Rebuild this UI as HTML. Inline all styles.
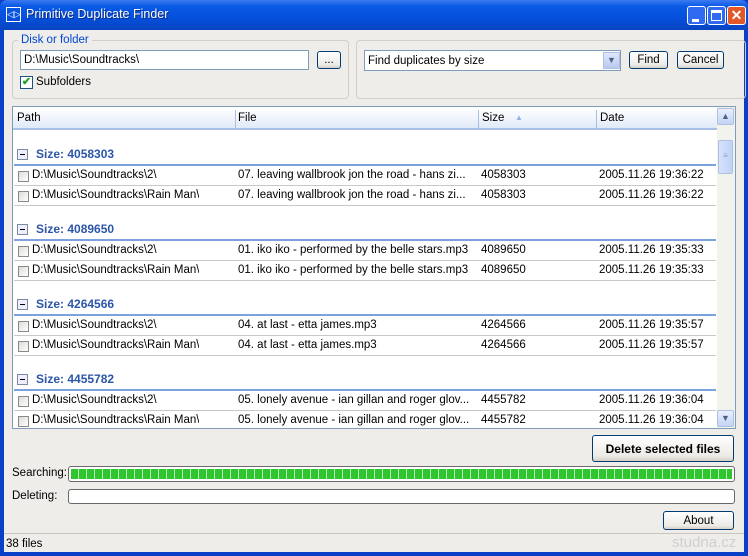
<!DOCTYPE html>
<html><head><meta charset="utf-8"><style>
*{box-sizing:border-box;margin:0;padding:0}
body{width:748px;height:556px;overflow:hidden;font-family:"Liberation Sans",sans-serif;font-size:11.5px;color:#000;background:#0a3fc8;position:relative}
.abs{position:absolute}
#title{left:0;top:0;width:748px;height:30px;background:linear-gradient(#3d7bf0,#0a5ae6 20%,#0550dc 60%,#0843c0);border-radius:7px 7px 0 0}
#client{left:4px;top:30px;width:740px;height:522px;background:#eeede9}
.gb{border:1px solid #d0cfc8;border-radius:4px}
.btn{border:1px solid #003c74;border-radius:3px;background:linear-gradient(#fff,#ecebe6 80%,#d6d0c5);font-size:11.5px;display:flex;align-items:center;justify-content:center}
.inp{background:#fff;border:1px solid #7f9db9}
.row{position:absolute;left:14px;width:702px;height:20px;border-bottom:1px solid #c8c8c8;background:#fff;overflow:hidden}
.row span{position:absolute;top:3px;white-space:nowrap;overflow:hidden}
.cb{position:absolute;left:4px;top:5px;width:11px;height:11px;border:1px solid #8a8a8a;background:linear-gradient(135deg,#dcdcd6,#fff)}
.gh{position:absolute;left:14px;width:702px;color:#2c55a8;font-weight:bold;font-size:12px}
.gh i{position:absolute;left:3px;top:3px;width:11px;height:11px;border:1px solid #7a8aa0;background:#eef;font-style:normal}
.gh i:after{content:"";position:absolute;left:2px;top:4px;width:5px;height:1px;background:#000}
.gl{position:absolute;left:14px;width:702px;height:2px;background:#7ba2dc}
</style></head><body>
<div id="title" class="abs">
 <div class="abs" style="left:6px;top:7px;width:15px;height:15px;border:1px solid #fff;color:#fff;font-size:9px;line-height:13px;text-align:center">◁▷</div>
 <div class="abs" style="left:26px;top:7px;color:#fff;font-size:12.5px;text-shadow:1px 1px #0a2a80">Primitive Duplicate Finder</div>
 <div class="abs" style="left:687px;top:6px;width:19px;height:19px;border:1px solid #fff;border-radius:3px;background:#2f6af0"><div class="abs" style="left:4px;top:12px;width:7px;height:3px;background:#fff"></div></div>
 <div class="abs" style="left:707px;top:6px;width:19px;height:19px;border:1px solid #fff;border-radius:3px;background:#2f6af0"><div class="abs" style="left:3px;top:3px;width:11px;height:11px;border:1px solid #fff;border-top-width:3px"></div></div>
 <div class="abs" style="left:727px;top:6px;width:19px;height:19px;border:1px solid #fff;border-radius:3px;background:#e2582a;color:#fff;font-weight:bold;font-size:14px;line-height:16px;text-align:center">✕</div>
</div>
<div id="client" class="abs"></div>
<div class="abs gb" style="left:12px;top:40px;width:337px;height:59px"></div>
<div class="abs" style="left:18px;top:34px;background:#eeede9;color:#0046d5;padding:0 3px">Disk or folder</div>
<div class="abs inp" style="left:20px;top:50px;width:289px;height:20px;padding:3px 3px">D:\Music\Soundtracks\</div>
<div class="abs btn" style="left:317px;top:51px;width:24px;height:18px">...</div>
<div class="abs" style="left:20px;top:76px;width:13px;height:13px;border:1px solid #1c5180;background:#fff;color:#21a121;font-size:11px;line-height:11px;text-align:center;font-weight:bold">✔</div>
<div class="abs" style="left:36px;top:76px">Subfolders</div>
<div class="abs gb" style="left:356px;top:40px;width:390px;height:59px"></div>
<div class="abs inp" style="left:364px;top:50px;width:257px;height:21px;padding:4px 3px">Find duplicates by size</div>
<div class="abs" style="left:603px;top:52px;width:17px;height:17px;background:linear-gradient(#dfe8fb,#b8c8ee);border:1px solid #b0c0e0;color:#4d6185;font-size:9px;text-align:center;line-height:15px">▼</div>
<div class="abs btn" style="left:629px;top:51px;width:39px;height:18px">Find</div>
<div class="abs btn" style="left:677px;top:51px;width:47px;height:18px">Cancel</div>
<div class="abs" style="left:12px;top:106px;width:724px;height:323px;background:#fff;border:1px solid #7f9db9"></div>
<div class="abs" style="left:13px;top:107px;width:704px;height:23px;background:linear-gradient(#fff,#f2f6fc 50%,#dfe9f8);border-bottom:2px solid #a8c0e8"></div>
<div class="abs" style="left:17px;top:112px">Path</div>
<div class="abs" style="left:235px;top:110px;width:1px;height:18px;background:#a8c0e0"></div>
<div class="abs" style="left:238px;top:112px">File</div>
<div class="abs" style="left:478px;top:110px;width:1px;height:18px;background:#a8c0e0"></div>
<div class="abs" style="left:482px;top:112px">Size</div>
<div class="abs" style="left:515px;top:113px;color:#8ab6e8;font-size:8px">▲</div>
<div class="abs" style="left:596px;top:110px;width:1px;height:18px;background:#a8c0e0"></div>
<div class="abs" style="left:600px;top:112px">Date</div>
<div class="abs" style="left:717px;top:107px;width:18px;height:321px;background:#f3f3ee"></div>
<div class="abs" style="left:717px;top:108px;width:17px;height:17px;border:1px solid #b0c0e0;border-radius:2px;background:linear-gradient(#e8efff,#c4d4f6);font-size:9px;color:#4d6185;text-align:center;line-height:15px">▲</div>
<div class="abs" style="left:718px;top:140px;width:15px;height:34px;border:1px solid #b0c0e0;border-radius:2px;background:linear-gradient(90deg,#d6e2fb,#c0d2f8);font-size:8px;color:#8ca0c8;text-align:center;line-height:30px">≡</div>
<div class="abs" style="left:717px;top:410px;width:17px;height:17px;border:1px solid #b0c0e0;border-radius:2px;background:linear-gradient(#e8efff,#c4d4f6);font-size:9px;color:#4d6185;text-align:center;line-height:15px">▼</div>

<div class="gh" style="top:146px;height:18px"><i></i><span style="position:absolute;left:22px;top:1px">Size: 4058303</span></div>
<div class="gl" style="top:164px"></div>
<div class="row" style="top:166px"><div class="cb"></div><span style="left:18px">D:\Music\Soundtracks\2\</span><span style="left:224px;width:240px">07. leaving wallbrook jon the road - hans zi...</span><span style="left:467px">4058303</span><span style="left:585px">2005.11.26 19:36:22</span></div>
<div class="row" style="top:186px"><div class="cb"></div><span style="left:18px">D:\Music\Soundtracks\Rain Man\</span><span style="left:224px;width:240px">07. leaving wallbrook jon the road - hans zi...</span><span style="left:467px">4058303</span><span style="left:585px">2005.11.26 19:36:22</span></div>

<div class="gh" style="top:221px;height:18px"><i></i><span style="position:absolute;left:22px;top:1px">Size: 4089650</span></div>
<div class="gl" style="top:239px"></div>
<div class="row" style="top:241px"><div class="cb"></div><span style="left:18px">D:\Music\Soundtracks\2\</span><span style="left:224px;width:240px">01. iko iko - performed by the belle stars.mp3</span><span style="left:467px">4089650</span><span style="left:585px">2005.11.26 19:35:33</span></div>
<div class="row" style="top:261px"><div class="cb"></div><span style="left:18px">D:\Music\Soundtracks\Rain Man\</span><span style="left:224px;width:240px">01. iko iko - performed by the belle stars.mp3</span><span style="left:467px">4089650</span><span style="left:585px">2005.11.26 19:35:33</span></div>

<div class="gh" style="top:296px;height:18px"><i></i><span style="position:absolute;left:22px;top:1px">Size: 4264566</span></div>
<div class="gl" style="top:314px"></div>
<div class="row" style="top:316px"><div class="cb"></div><span style="left:18px">D:\Music\Soundtracks\2\</span><span style="left:224px">04. at last - etta james.mp3</span><span style="left:467px">4264566</span><span style="left:585px">2005.11.26 19:35:57</span></div>
<div class="row" style="top:336px"><div class="cb"></div><span style="left:18px">D:\Music\Soundtracks\Rain Man\</span><span style="left:224px">04. at last - etta james.mp3</span><span style="left:467px">4264566</span><span style="left:585px">2005.11.26 19:35:57</span></div>

<div class="gh" style="top:371px;height:18px"><i></i><span style="position:absolute;left:22px;top:1px">Size: 4455782</span></div>
<div class="gl" style="top:389px"></div>
<div class="row" style="top:391px"><div class="cb"></div><span style="left:18px">D:\Music\Soundtracks\2\</span><span style="left:224px;width:240px">05. lonely avenue - ian gillan and roger glov...</span><span style="left:467px">4455782</span><span style="left:585px">2005.11.26 19:36:04</span></div>
<div class="row" style="top:411px;height:17px;border:none"><div class="cb"></div><span style="left:18px">D:\Music\Soundtracks\Rain Man\</span><span style="left:224px;width:240px">05. lonely avenue - ian gillan and roger glov...</span><span style="left:467px">4455782</span><span style="left:585px">2005.11.26 19:36:04</span></div>

<div class="abs btn" style="left:592px;top:435px;width:142px;height:27px;font-weight:bold;font-size:12px">Delete selected files</div>
<div class="abs" style="left:12px;top:467px">Searching:</div>
<div class="abs" style="left:68px;top:466px;width:667px;height:16px;border:1px solid #686868;border-radius:3px;background:#fff;padding:2px"><div style="width:100%;height:100%;background:repeating-linear-gradient(90deg,#2ec52e 0 7px,#bfeebf 7px 8px)"></div></div>
<div class="abs" style="left:12px;top:490px">Deleting:</div>
<div class="abs" style="left:68px;top:489px;width:667px;height:15px;border:1px solid #686868;border-radius:3px;background:#fff"></div>
<div class="abs btn" style="left:663px;top:511px;width:71px;height:19px">About</div>
<div class="abs" style="left:4px;top:533px;width:740px;height:1px;background:#c8c6bc"></div>
<div class="abs" style="left:6px;top:538px">38 files</div>
<div class="abs" style="left:672px;top:534px;color:#cfcfcf;font-size:15px">studna.cz</div>
</body></html>
